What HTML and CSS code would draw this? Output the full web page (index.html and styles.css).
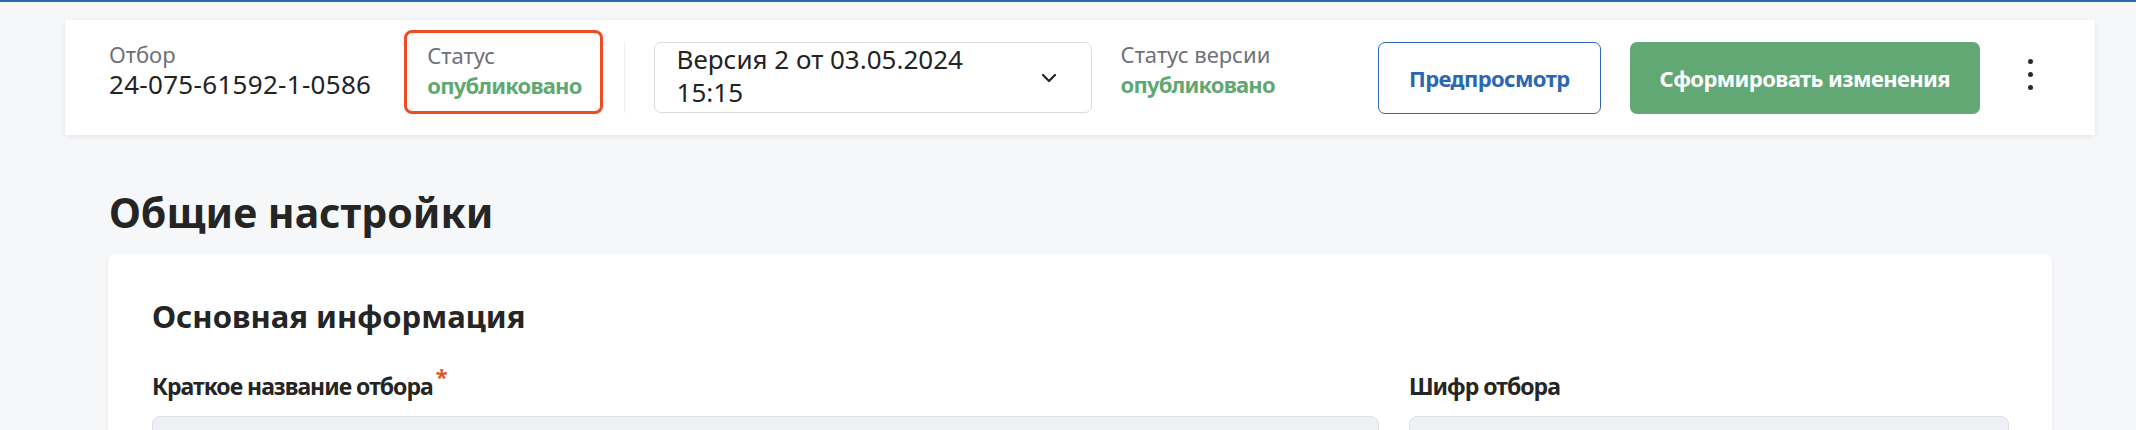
FILE: index.html
```html
<!DOCTYPE html>
<html lang="ru">
<head>
<meta charset="utf-8">
<title>Общие настройки</title>
<link rel="stylesheet" href="styles.css">
</head>
<body>
<div class="topline"></div>
<div class="page">
  <header class="toolbar">
    <div class="field">
      <div class="field-label">Отбор</div>
      <div class="field-value field-value--code">24-075-61592-1-0586</div>
    </div>
    <div class="field field--highlight">
      <div class="field-label">Статус</div>
      <div class="field-value field-value--ok">опубликовано</div>
    </div>
    <div class="divider"></div>
    <button class="select" type="button">
      <span class="select-text">Версия 2 от 03.05.2024 15:15</span>
      <svg class="chevron" width="16" height="10" viewBox="0 0 16 10" aria-hidden="true"><path d="M2 2l6 6 6-6" fill="none" stroke="#222" stroke-width="2.2" stroke-linecap="round" stroke-linejoin="round"/></svg>
    </button>
    <div class="field field--version">
      <div class="field-label">Статус версии</div>
      <div class="field-value field-value--ok">опубликовано</div>
    </div>
    <div class="actions">
      <button class="btn btn--outline" type="button">Предпросмотр</button>
      <button class="btn btn--primary" type="button">Сформировать изменения</button>
      <button class="kebab" type="button" aria-label="Ещё"><span></span><span></span><span></span></button>
    </div>
  </header>

  <h1 class="page-title">Общие настройки</h1>

  <section class="card">
    <h2 class="card-title">Основная информация</h2>
    <div class="form-grid">
      <div class="form-field">
        <div class="form-label">Краткое название отбора<span class="req">*</span></div>
        <div class="input"></div>
      </div>
      <div class="form-field">
        <div class="form-label">Шифр отбора</div>
        <div class="input"></div>
      </div>
    </div>
  </section>
</div>
</body>
</html>
```

FILE: styles.css
```css
* { box-sizing: border-box; }

body {
  margin: 0;
  background: #f6f7f9;
  font-family: "Noto Sans", "Open Sans", sans-serif;
  color: #232323;
}

.topline {
  height: 2px;
  background: #2d6bb4;
}

.page {
  padding: 18px 41px 0 65px;
}

.toolbar {
  display: flex;
  align-items: center;
  height: 115px;
  padding: 0 45px 0 44px;
  background: #fff;
  box-shadow: 0 2px 6px rgba(20, 30, 50, 0.08);
}

.field {
  margin-bottom: 15px;
  white-space: nowrap;
}

.field-label {
  font-size: 22px;
  line-height: 28px;
  color: #6e7178;
}

.field-value {
  font-size: 26px;
  line-height: 32px;
  color: #232323;
}

.field-value--code {
  letter-spacing: 0.3px;
}

.field-value--ok {
  font-size: 22px;
  font-weight: 700;
  letter-spacing: -0.8px;
  color: #5fa873;
}

.field--highlight {
  margin-left: 33px;
  margin-bottom: 11px;
  padding: 8px 18px 10px 20px;
  border: 3px solid #ef4b25;
  border-radius: 8px;
}

.divider {
  width: 1px;
  height: 71px;
  margin-left: 21px;
  background: #eceef1;
}

.select {
  display: flex;
  align-items: center;
  gap: 30px;
  width: 438px;
  height: 71px;
  margin-left: 29px;
  padding: 0 34px 0 22px;
  background: #fff;
  border: 1px solid #d9dce2;
  border-radius: 7px;
  font: inherit;
  text-align: left;
  color: #232323;
}

.select-text {
  flex: 1;
  align-self: flex-start;
  font-size: 26px;
  line-height: 33px;
}

.chevron {
  flex: none;
}

.field--version {
  margin-left: 29px;
}

.actions {
  display: flex;
  align-items: center;
  margin-left: auto;
}

.btn {
  height: 72px;
  padding: 0 30px;
  border-radius: 7px;
  font-family: inherit;
  font-size: 22px;
  font-weight: 700;
  letter-spacing: -0.6px;
  white-space: nowrap;
}

.btn--outline {
  background: #fff;
  border: 1px solid #2e6ab3;
  color: #2b66b1;
}

.btn--primary {
  margin-left: 29px;
  background: #62a874;
  border: 0;
  color: #fff;
}

.kebab {
  display: flex;
  flex-direction: column;
  align-items: center;
  justify-content: center;
  gap: 8px;
  width: 40px;
  height: 40px;
  margin-left: 30px;
  margin-bottom: 7px;
  padding: 0;
  background: transparent;
  border: 0;
}

.kebab span {
  width: 5px;
  height: 5px;
  border-radius: 50%;
  background: #2a2a2a;
}

.page-title {
  margin: 53px 0 18px 44px;
  font-size: 41px;
  line-height: 48px;
  font-weight: 700;
  color: #252525;
}

.card {
  margin: 0 43px;
  padding: 44px 43px 44px 44px;
  background: #fff;
  border-radius: 8px;
  box-shadow: 0 1px 4px rgba(20, 30, 50, 0.05);
}

.card-title {
  margin: 0 0 36px;
  font-size: 31px;
  line-height: 36px;
  font-weight: 700;
  color: #252525;
}

.form-grid {
  display: grid;
  grid-template-columns: 1fr 600px;
  column-gap: 30px;
}

.form-label {
  margin-bottom: 14px;
  font-size: 23px;
  line-height: 32px;
  font-weight: 700;
  letter-spacing: -1px;
  color: #252525;
}

.req {
  position: relative;
  top: -10px;
  margin-left: 3px;
  font-size: 22px;
  letter-spacing: 0;
  color: #e0531f;
}

.input {
  height: 56px;
  background: #eef0f4;
  border: 1px solid #dde0e6;
  border-radius: 8px;
}
```
